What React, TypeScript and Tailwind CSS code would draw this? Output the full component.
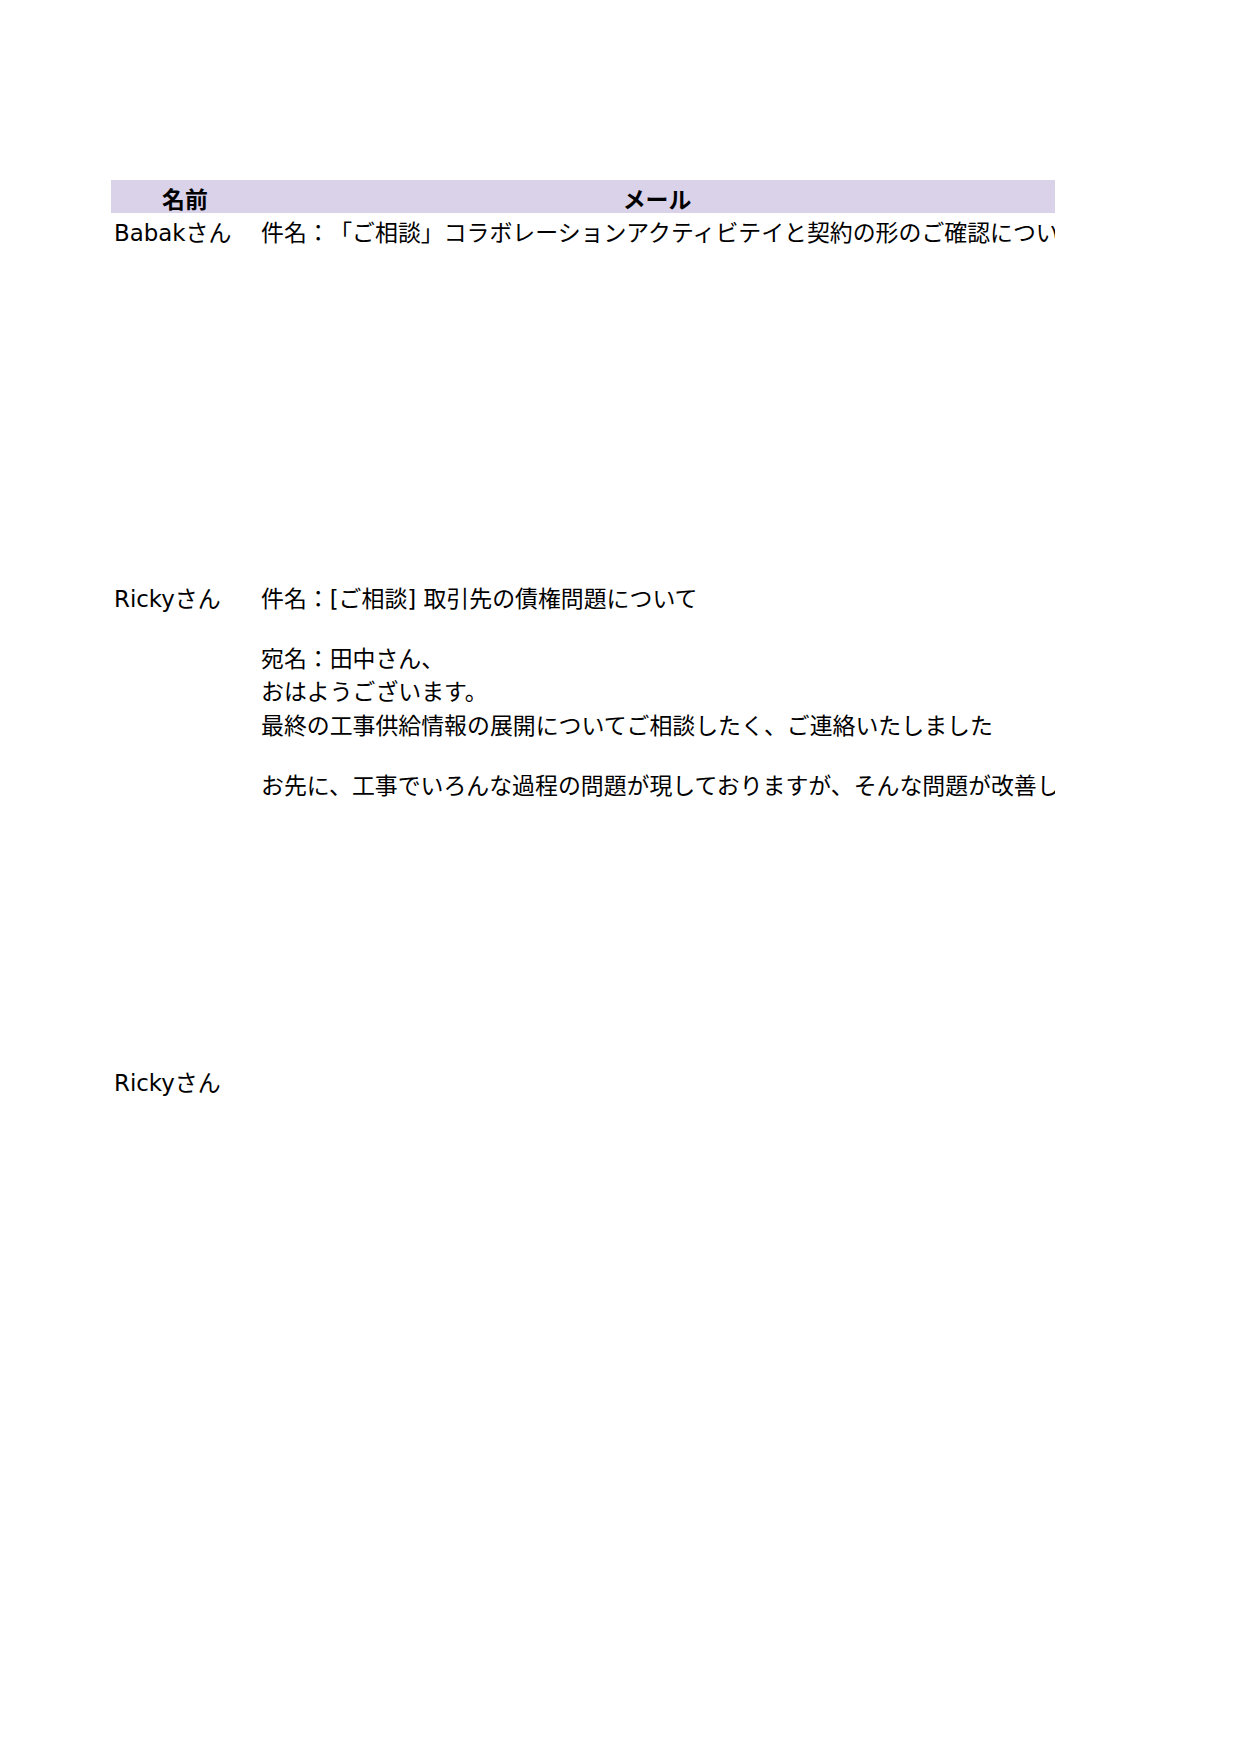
import React from 'react';

const font = "font-['DejaVu_Sans','Noto_Sans_CJK_JP',sans-serif]";

const NameCell = ({ name }: { name: string }) => (
  <div className="pl-[3px] pt-[4px] whitespace-nowrap">{name}</div>
);

export default function App() {
  return (
    <div className={`min-h-[1754px] w-[1241px] bg-white text-black ${font} text-[22.9px] leading-[33.5px]`}>
      <div className="pt-[180px] pl-[111px]">
        <div className="w-[944px] overflow-hidden">
          {/* header */}
          <div className="grid grid-cols-[148px_796px] h-[33px] bg-[#d9d2e9] font-bold leading-[29px] pt-[6px]">
            <div className="text-center">名前</div>
            <div className="text-center">メール</div>
          </div>

          {/* row 1 */}
          <div className="grid grid-cols-[148px_796px] h-[366px]">
            <NameCell name="Babakさん" />
            <div className="pt-[4px] pl-[2px] whitespace-nowrap">
              件名：<span className="ml-[11px]">「ご相談」コラボレーションアクティビテイと契約の形のご確認について</span>
            </div>
          </div>

          {/* row 2 */}
          <div className="grid grid-cols-[148px_796px] h-[484px]">
            <NameCell name="Rickyさん" />
            <div className="pt-[4px] pl-[2px] whitespace-nowrap">
              <div>件名：[ご相談] 取引先の債権問題について</div>
              <div className="mt-[26px]">宛名：田中さん、</div>
              <div>おはようございます。</div>
              <div>最終の工事供給情報の展開についてご相談したく、ご連絡いたしました</div>
              <div className="mt-[27px]">
                お先に、工事でいろんな過程の問題が現しておりますが、そんな問題が改善していくために
              </div>
            </div>
          </div>

          {/* row 3 */}
          <div className="grid grid-cols-[148px_796px] h-[100px]">
            <NameCell name="Rickyさん" />
            <div />
          </div>
        </div>
      </div>
    </div>
  );
}
